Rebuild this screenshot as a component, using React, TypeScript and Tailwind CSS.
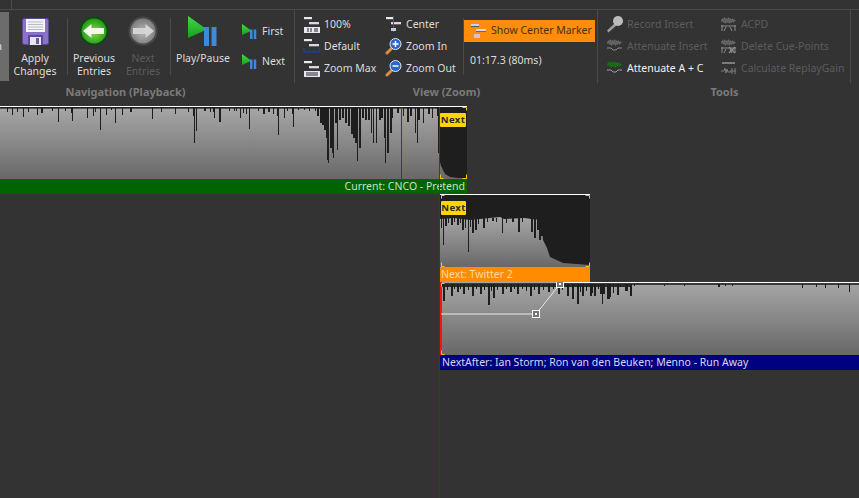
import React from "react";

type Spike = [number, number, number?];

const track1Spikes: Spike[] = [
  [7, 4], [12, 7], [17, 4], [23, 9], [28, 4], [37, 7], [41, 5, 2], [52, 3], [58, 14], [65, 3], [71, 5, 2], [72, 13],
  [87, 10], [93, 8], [95, 4], [100, 22], [106, 7], [111, 2], [115, 15], [122, 7], [130, 4, 2], [152, 11], [161, 4],
  [175, 6], [188, 4], [193, 8], [194, 35], [196, 23], [204, 3, 2], [210, 4], [213, 4], [214, 10], [219, 14, 2],
  [229, 3], [234, 3], [236, 3], [240, 10], [243, 5], [246, 6], [249, 21], [258, 3], [263, 6, 2], [268, 4, 2],
  [273, 6], [277, 8], [278, 27], [284, 10], [287, 3], [292, 6, 2], [293, 19], [298, 2],
  [304, 2], [309, 3], [315, 3], [317, 8, 2], [320, 15, 2], [322, 17, 2], [324, 22, 2], [326, 30, 2], [327, 52], [328, 55], [330, 40, 2],
  [332, 45, 2], [333, 50], [335, 15, 2], [337, 42], [339, 12, 2], [342, 10, 2], [345, 15, 2], [348, 18, 2], [351, 26, 2], [353, 30, 2],
  [355, 35, 3], [357, 53], [359, 40, 2], [362, 10, 2], [365, 12, 2], [368, 12, 2], [371, 25], [373, 35], [376, 35], [379, 12, 2],
  [381, 10, 2], [384, 30, 2], [385, 55], [387, 45, 2], [390, 25, 2], [392, 10], [397, 5, 2], [403, 8], [407, 14, 2],
  [410, 8, 2], [415, 25], [417, 35], [418, 12, 2], [423, 15], [428, 6, 2], [432, 10], [437, 8, 2], [438, 45, 2],
];

const track2Spikes: Spike[] = [
  [1, 10], [3, 27], [5, 8, 2], [8, 5], [11, 7, 2], [14, 4], [17, 7, 2], [20, 5], [22, 12, 2], [25, 10], [28, 34], [30, 9],
  [32, 15, 2], [35, 12, 2], [38, 6], [43, 10, 2], [47, 4], [52, 3, 2], [56, 4], [62, 15], [66, 5], [72, 4, 2], [78, 14, 2], [82, 4],
  [91, 14, 2], [94, 20, 2], [97, 12, 2], [99, 22, 2], [101, 18, 2],
];

const track3Spikes: Spike[] = [
  [3, 17, 2], [7, 6], [11, 12, 2], [14, 5], [17, 8, 2], [20, 5], [23, 10, 2], [28, 6], [32, 12, 2], [36, 5], [40, 10, 2], [44, 6],
  [48, 21, 2], [51, 7], [53, 14, 2], [57, 6], [62, 10, 2], [66, 5], [70, 8, 2], [74, 5], [77, 10, 2], [82, 5], [86, 7], [90, 12, 2],
  [94, 6], [98, 10, 2], [103, 6], [108, 8, 2], [113, 5], [118, 10, 2], [122, 6], [127, 12, 2], [132, 15, 2], [137, 20, 2], [140, 8],
  [142, 12, 2], [146, 7], [150, 12, 2], [152, 9], [154, 12, 2], [158, 5], [160, 10, 2], [162, 20], [163, 10, 2], [167, 15, 3], [169, 13, 2],
  [173, 9], [177, 11, 2], [180, 3], [185, 7, 3], [190, 12, 2], [194, 2], [224, 2], [244, 2], [278, 3, 2], [285, 2], [292, 2], [362, 4],
  [376, 3], [385, 4], [398, 4], [409, 8],
];

const WaveGradient = ({ id }: { id: string }) => (
  <linearGradient id={id} x1="0" y1="0" x2="0" y2="1">
    <stop offset="0" stopColor="#a6a6a6" />
    <stop offset="1" stopColor="#686868" />
  </linearGradient>
);

const Spikes = ({ data, top = 2 }: { data: Spike[]; top?: number }) => (
  <g fill="#1e1e1e">
    {data.map(([x, depth, w], i) => (
      <rect key={i} x={x} y={top} width={w ?? 1} height={depth} />
    ))}
  </g>
);

const Corner = ({ x, y, flipX, flipY }: { x: number; y: number; flipX?: boolean; flipY?: boolean }) => (
  <path
    d={`M${x + (flipX ? -3.5 : 3.5)} ${y + 0.5}H${x + 0.5}V${y + (flipY ? -3.5 : 3.5)}`}
    fill="none"
    stroke="#f5c800"
    strokeWidth="1"
  />
);

const NextBadge = ({ x, y, w }: { x: number; y: number; w: number }) => (
  <div
    className="absolute h-[14px] bg-[#ffd400] rounded-[1px] flex items-center justify-center text-[9.5px] font-bold text-[#2a2a2a] tracking-[0.4px]"
    style={{ left: x, top: y, width: w }}
  >
    Next
  </div>
);

const Track1Wave = () => (
  <svg width="467" height="73" className="block">
    <defs>
      <WaveGradient id="w1" />
    </defs>
    <rect width="467" height="73" fill="#1e1e1e" />
    <polygon points="0,2 439,2 439,52 441,60 445,68 450,71 458,72 467,72 467,73 0,73" fill="url(#w1)" />
    <rect x="0" y="2" width="439" height="1" fill="#555" />
    <Spikes data={track1Spikes} />
    <rect x="439" y="2" width="28" height="50" fill="#1e1e1e" />
    <rect width="467" height="1" fill="#fff" />
    <rect x="401" y="1" width="1" height="72" fill="#a01414" />
    <rect x="439" y="1" width="1" height="72" fill="#a01414" />
    <Corner x={466} y={1} flipX />
    <Corner x={466} y={72} flipX flipY />
    <Corner x={440} y={72} flipY />
  </svg>
);

const Track2Wave = () => (
  <svg width="150" height="73" className="block">
    <defs>
      <WaveGradient id="w2" />
    </defs>
    <rect width="150" height="73" fill="#1e1e1e" />
    <polygon
      points="0,25 14,24 30,26 50,24 60,23 64,25 85,24 91,25 101,26 103,46 107,54 110,63 123,69 150,71 150,73 0,73"
      fill="url(#w2)"
    />
    <Spikes data={track2Spikes} top={24} />
    <rect width="150" height="1" fill="#fff" />
    <Corner x={1} y={1} />
    <Corner x={149} y={1} flipX />
    <Corner x={1} y={72} flipY />
    <Corner x={149} y={72} flipX flipY />
  </svg>
);

const Track3Wave = () => (
  <svg width="419" height="73" className="block">
    <defs>
      <WaveGradient id="w3" />
    </defs>
    <rect width="419" height="73" fill="url(#w3)" />
    <rect y="1" width="419" height="2" fill="#3a3a3a" />
    <rect y="2" width="192" height="3" fill="#2a2a2a" />
    <Spikes data={track3Spikes} />
    <rect x="120" width="299" height="1" fill="#fff" />
    <rect width="2" height="73" fill="#ff1010" />
    <path d="M1 32H96L120 2" fill="none" stroke="#e8e8e8" strokeWidth="1" />
    <rect x="92.500" y="28.500" width="7" height="7" fill="#777" stroke="#fff" />
    <rect x="95" y="31" width="2" height="2" fill="#fff" />
    <rect x="116.500" y="-1.500" width="7" height="7" fill="#777" stroke="#fff" />
    <rect x="119" y="1" width="2" height="2" fill="#fff" />
    <Corner x={1} y={1} />
    <Corner x={1} y={72} flipY />
  </svg>
);

const Floppy = () => (
  <svg width="27" height="27" viewBox="0 0 27 27" className="mt-[2px]">
    <rect x="0.500" y="0.500" width="26" height="26" rx="2" fill="#8a70c8" stroke="#5a4a98" />
    <rect x="4" y="1" width="19" height="13" fill="#f4f4f4" />
    <path d="M6 4H21M6 6.500H21M6 9H21M6 11.500H21" stroke="#b8b8c8" />
    <rect x="6" y="17" width="15" height="10" fill="#5a4a98" />
    <rect x="8" y="19" width="11" height="8" fill="#e8e8e8" />
    <rect x="14" y="20" width="3" height="6" fill="#6a5aa8" />
  </svg>
);

const RoundArrow = ({ dir, dim }: { dir: "left" | "right"; dim?: boolean }) => (
  <svg width="30" height="30" viewBox="0 0 30 30">
    <defs>
      <radialGradient id={dim ? "ra2" : "ra1"} cx="0.5" cy="0.55" r="0.55">
        <stop offset="0" stopColor={dim ? "#b8b8b8" : "#8ad84a"} />
        <stop offset="1" stopColor={dim ? "#7a7a7a" : "#1c9a14"} />
      </radialGradient>
    </defs>
    <circle cx="15" cy="15" r="14.500" fill={dim ? "#484848" : "#0c4a10"} />
    <circle cx="15" cy="15" r="12.500" fill={`url(#${dim ? "ra2" : "ra1"})`} />
    <path
      d={dir === "left" ? "M4 15l8.500-7v4H25v6H12.500v4z" : "M26 15l-8.500-7v4H5v6h12.500v4z"}
      fill={dim ? "#d4d4d4" : "#f4f6f0"}
    />
  </svg>
);

const PlayPause = ({ size }: { size: number }) => (
  <svg width={size} height={size} viewBox="0 0 30 30">
    <defs>
      <linearGradient id={`pg${size}`} x1="0" y1="0" x2="0" y2="1">
        <stop offset="0" stopColor="#44d848" />
        <stop offset="1" stopColor="#16a01e" />
      </linearGradient>
    </defs>
    <path d="M0 0L19 13.500 0 22z" fill={`url(#pg${size})`} />
    <rect x="16" y="11" width="5" height="19" fill="#3f8ad8" />
    <rect x="23.500" y="11" width="5" height="19" fill="#3f8ad8" />
  </svg>
);

// the small "zoom bar" glyph used by the view group and the center marker
const ZoomBars = ({ variant }: { variant: "100" | "default" | "max" | "center" | "marker" }) => (
  <svg width="17" height="17" viewBox="0 0 17 17">
    <rect x="1" y="1" width="8" height="2" fill={variant === "marker" ? "#d0d0e0" : "#e8e8f0"} />
    <rect x="1" y="3" width="8" height="1" fill="#555" />
    <rect x="6" y="6" width="10" height="2" fill="#d8d8e4" />
    <rect x="6" y="8" width="10" height="1" fill="#666" />
    {variant === "center" && <rect x="8" y="0" width="1" height="16" fill="#e02020" />}
    {variant === "marker" && <rect x="4" y="11" width="6" height="4" fill="#c8c8d8" />}
    {variant === "center" && <rect x="6" y="12" width="5" height="3" fill="#c8c8d8" />}
    {(variant === "100" || variant === "max") && <rect x="1" y="11" width="16" height="6" fill="#e8e8f0" />}
    {variant === "100" && <path d="M5 12v4M8 12v4M12 12v4M14 12v4" stroke="#223" strokeWidth="1" />}
    {variant === "max" && <path d="M4 12v4M6 12v4M8 12v4M10 12v4M12 12v4M14 12v4" stroke="#223" strokeWidth="1" />}
    {variant === "default" && <path d="M1 10v5M16 10v5M1 14H16M6 12v3M11 12v3" stroke="#2040b0" strokeWidth="1" fill="none" />}
  </svg>
);

const Magnifier = ({ plus }: { plus?: boolean }) => (
  <svg width="17" height="17" viewBox="0 0 17 17">
    <path d="M7 10L2 15" stroke="#d89040" strokeWidth="3" strokeLinecap="round" />
    <circle cx="10.500" cy="6" r="5.500" fill="#2a68c8" stroke="#e0e8f4" />
    <path d={plus ? "M7.500 6h6M10.500 3v6" : "M7.500 6h6"} stroke="#fff" strokeWidth="1.500" />
  </svg>
);

const Mic = () => (
  <svg width="17" height="17" viewBox="0 0 17 17">
    <path d="M9 7L1 14.500 2.500 16.500 11 9z" fill="#9c9c9c" />
    <circle cx="12" cy="5" r="5" fill="#bcbcbc" />
  </svg>
);

const Atten = ({ color = "#7c7c7c", line = "#8a8a8a" }: { color?: string; line?: string }) => (
  <svg width="17" height="17" viewBox="0 0 17 17">
    <path d="M1 5h1v-2h1v3h1v-4h1v5h1v-4h1v3h1v-4h1v5h1v-4h1v3h1v-3h1v3h1v-2h1v1" fill="none" stroke={color} strokeWidth="0.800" />
    <path d="M1 10h4l2 2h3l2-2h4" fill="none" stroke={line} strokeWidth="1" />
  </svg>
);

const Acpd = ({ cross }: { cross?: boolean }) => (
  <svg width="17" height="17" viewBox="0 0 17 17">
    <path d="M1 5h1v-2h1v3h1v-4h1v5h1v-4h1v3h1v-4h1v5h1v-4h1v3h1v-3h1v3h1v-2h1v1" fill="none" stroke="#7c7c7c" strokeWidth="0.800" />
    <path d="M1 10h15M2 9v6M15 9v6M4 15l2-4M12 15l-2-4" fill="none" stroke="#8a8a8a" />
    {cross && <path d="M9 9l6 6M15 9l-6 6" stroke="#8a8a8a" strokeWidth="1.500" />}
  </svg>
);

const ReplayGain = () => (
  <svg width="17" height="17" viewBox="0 0 17 17">
    <rect x="2" y="2" width="13" height="2" fill="#7c7c7c" />
    <path d="M1 11h3l1-3 1 5 1-4 1 3h3M12 8v6M15 8v6M10 11h6" fill="none" stroke="#7c7c7c" />
  </svg>
);

const Small = ({ icon, label, disabled, bright }: { icon: React.ReactNode; label: string; disabled?: boolean; bright?: boolean }) => (
  <div className="flex items-center h-[22px] gap-[4px]">
    <span className="w-[17px] h-[17px] shrink-0 flex">{icon}</span>
    <span className={`whitespace-nowrap ${disabled ? "text-[#5c5c5c]" : bright ? "text-[#f2f2f2]" : "text-[#dcdcdc]"}`}>{label}</span>
  </div>
);

const Big = ({ icon, lines, w, disabled }: { icon: React.ReactNode; lines: string[]; w: string; disabled?: boolean }) => (
  <div className={`flex flex-col items-center shrink-0 ${w} ${disabled ? "text-[#5c5c5c]" : "text-[#dcdcdc]"}`}>
    <div className="h-[42px] pb-[1px] flex items-center justify-center">{icon}</div>
    {lines.map((l) => (
      <div key={l} className="h-[13px] leading-[13px] whitespace-nowrap">{l}</div>
    ))}
  </div>
);

const Group = ({ label, w, children, shift }: { label: string; w: string; children: React.ReactNode; shift?: string }) => (
  <div className={`flex flex-col shrink-0 ${w} ${shift ?? ""}`}>
    <div className="h-[73px] border-r border-[#4a4a4a] flex items-stretch">{children}</div>
    <div className="h-[21px] pb-[2px] flex items-center justify-center font-bold text-[11px] text-[#7a7a7a]">{label}</div>
  </div>
);

const Sep = () => <div className="w-px bg-[#4a4a4a] my-[8px] shrink-0" />;

export default function App() {
  return (
    <div
      className="relative w-[859px] h-[498px] overflow-hidden bg-[#333333] text-[10.5px]"
      style={{ fontFamily: '"Noto Sans", "Open Sans", sans-serif' }}
    >
      <div className="h-[10px] border-b border-[#4a4a4a] flex">
        <div className="w-[12px] border-r border-[#4a4a4a]" />
      </div>

      <div className="flex">
        <Group label="Navigation (Playback)" w="w-[339px]" shift="-ml-[44px]">
          <div className="w-[53px] my-[2px] bg-[#6c6c6c] text-[#e8e8e8] flex items-center justify-end pr-[7px] shrink-0">n</div>
          <Big icon={<Floppy />} lines={["Apply", "Changes"]} w="w-[58px] pr-[6px]" />
          <Sep />
          <Big icon={<RoundArrow dir="left" />} lines={["Previous", "Entries"]} w="w-[52px]" />
          <Big icon={<RoundArrow dir="right" dim />} lines={["Next", "Entries"]} w="w-[50px] pr-[4px]" disabled />
          <Sep />
          <Big icon={<PlayPause size={30} />} lines={["Play/Pause"]} w="w-[64px]" />
          <div className="flex flex-col justify-center gap-[8px] pl-[7px]">
            <div className="flex items-center gap-[5px] h-[22px]"><PlayPause size={15} /><span className="text-[#dcdcdc]">First</span></div>
            <div className="flex items-center gap-[5px] h-[22px]"><PlayPause size={15} /><span className="text-[#dcdcdc]">Next</span></div>
          </div>
        </Group>

        <Group label="View (Zoom)" w="w-[303px]">
          <div className="flex flex-col justify-center w-[81px] pl-[8px] shrink-0">
            <Small icon={<ZoomBars variant="100" />} label="100%" />
            <Small icon={<ZoomBars variant="default" />} label="Default" />
            <Small icon={<ZoomBars variant="max" />} label="Zoom Max" />
          </div>
          <div className="flex flex-col justify-center w-[87px] shrink-0 pl-[9px]">
            <Small icon={<ZoomBars variant="center" />} label="Center" />
            <Small icon={<Magnifier plus />} label="Zoom In" />
            <Small icon={<Magnifier />} label="Zoom Out" />
          </div>
          <Sep />
          <div className="flex flex-col pt-[10px]">
            <div className="h-[22px] w-[131px] bg-[#ff8c0a] flex items-center pl-[6px] gap-[4px] text-[#4a3010]">
              <ZoomBars variant="marker" />
              <span className="whitespace-nowrap">Show Center Marker</span>
            </div>
            <div className="pl-[6px] mt-[11px] leading-[15px] text-[#dcdcdc]">01:17.3 (80ms)</div>
          </div>
        </Group>

        <Group label="Tools" w="w-[253px]">
          <div className="flex flex-col justify-center w-[122px] pl-[8px] shrink-0">
            <Small icon={<Mic />} label="Record Insert" disabled />
            <Small icon={<Atten />} label="Attenuate Insert" disabled />
            <Small icon={<Atten color="#0a8a0a" line="#a0a0a0" />} label="Attenuate A + C" bright />
          </div>
          <div className="flex flex-col justify-center">
            <Small icon={<Acpd />} label="ACPD" disabled />
            <Small icon={<Acpd cross />} label="Delete Cue-Points" disabled />
            <Small icon={<ReplayGain />} label="Calculate ReplayGain" disabled />
          </div>
        </Group>
      </div>

      <div className="relative mt-[2px]">
        <div className="absolute z-10 left-[439px] top-[73px] w-px h-[319px] bg-[#7a1c1c]" />

        <div className="relative w-[467px]">
          <Track1Wave />
          <NextBadge x={440} y={7} w={26} />
          <div className="h-[15px] bg-[#006400] text-[#c8e0c8] text-right pr-[2px] leading-[15px] whitespace-nowrap">
            Current: CNCO - Pretend
          </div>
        </div>

        <div className="relative w-[150px] ml-[440px]">
          <Track2Wave />
          <NextBadge x={1} y={7} w={25} />
          <div className="h-[15px] bg-[#ff8c00] text-[#ffd9a8] pl-[1px] leading-[15px] whitespace-nowrap">Next: Twitter 2</div>
        </div>

        <div className="w-[419px] ml-[440px]">
          <Track3Wave />
          <div className="h-[15px] bg-[#000080] text-[#d8d8f0] pl-[2px] leading-[15px] whitespace-nowrap">
            NextAfter: Ian Storm; Ron van den Beuken; Menno - Run Away
          </div>
        </div>
      </div>
    </div>
  );
}
